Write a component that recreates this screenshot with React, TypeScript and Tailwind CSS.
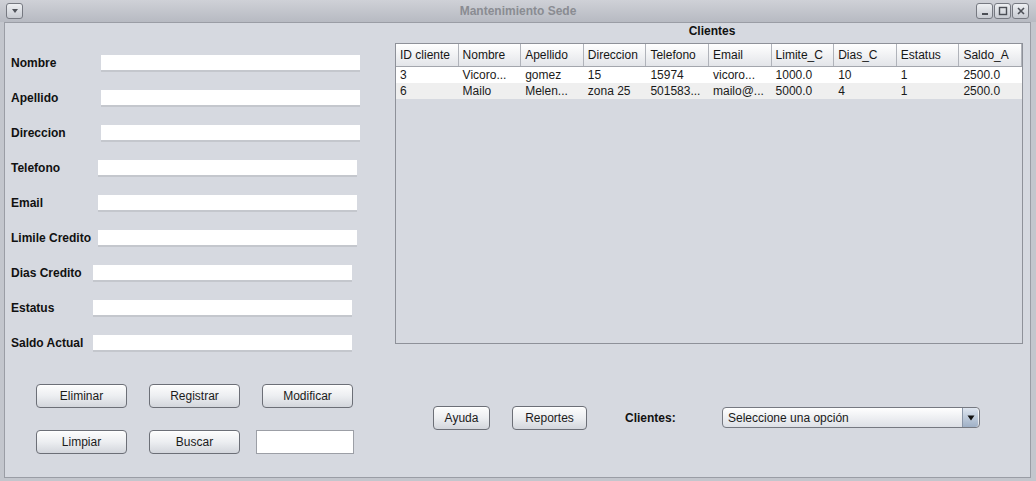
import React from 'react';

// --- form data ---
const groups = [
    { labelW: 'w-[90px]', rows: ['Nombre', 'Apellido', 'Direccion'] },
    { labelW: 'w-[87px]', rows: ['Telefono', 'Email', 'Limile Credito'] },
    { labelW: 'w-[82px]', rows: ['Dias Credito', 'Estatus', 'Saldo Actual'] },
];

const columns = ['ID cliente', 'Nombre', 'Apellido', 'Direccion', 'Telefono', 'Email', 'Limite_C', 'Dias_C', 'Estatus', 'Saldo_A'];

const clientes = [
    ['3', 'Vicoro...', 'gomez', '15', '15974', 'vicoro...', '1000.0', '10', '1', '2500.0'],
    ['6', 'Mailo', 'Melen...', 'zona 25', '501583...', 'mailo@...', '5000.0', '4', '1', '2500.0'],
];

const WinButton: React.FC<{ className?: string; children: React.ReactNode }> = ({ className = '', children }) => (
    <div className={`h-[24px] flex items-center justify-center rounded-[4px] border border-[#6c6f77] bg-gradient-to-b from-[#fdfdfd] via-[#eceef1] to-[#d3d6dc] text-[12px] text-[#1b1b1b] shadow-[inset_0_1px_0_#ffffff] ${className}`}>
        {children}
    </div>
);

const TitleButton: React.FC<{ children: React.ReactNode }> = ({ children }) => (
    <div className="w-[17px] h-[16px] rounded-[3px] border border-[#767981] bg-gradient-to-b from-[#eef0f3] to-[#c7cad1] flex items-center justify-center">
        {children}
    </div>
);

const TextField: React.FC<{ w?: string }> = ({ w = 'w-[259px]' }) => (
    <div className={`${w} h-[15px] bg-white shadow-[0_2px_0_#c4c7cd]`} />
);

export default function App() {
    return (
        <div className="w-[1036px] h-[481px] flex flex-col bg-[#c3c6cd] overflow-hidden" style={{ fontFamily: '"Liberation Sans", Arial, sans-serif' }}>
            {/* title bar */}
            <div className="h-[22px] shrink-0 relative flex items-center justify-between px-[6px] bg-gradient-to-b from-[#cfd1d7] to-[#b7bac2]">
                <TitleButton>
                    <svg width="8" height="6" viewBox="0 0 8 6"><path d="M1 1h6L4 5z" fill="#50535a" /></svg>
                </TitleButton>
                <div className="absolute left-0 right-0 top-0 h-[22px] flex items-center justify-center pointer-events-none">
                    <span className="text-[12px] font-bold text-[#8a8c92]">Mantenimiento Sede</span>
                </div>
                <div className="flex gap-[1px] mr-[1px]">
                    <TitleButton>
                        <svg width="10" height="10" viewBox="0 0 10 10"><path d="M2 8h6" stroke="#4c4f56" strokeWidth="2" /></svg>
                    </TitleButton>
                    <TitleButton>
                        <svg width="10" height="10" viewBox="0 0 10 10"><rect x="1.5" y="1.5" width="7" height="7" fill="none" stroke="#4c4f56" strokeWidth="1.4" /></svg>
                    </TitleButton>
                    <TitleButton>
                        <svg width="10" height="10" viewBox="0 0 10 10"><path d="M2 2l6 6M8 2l-6 6" stroke="#4c4f56" strokeWidth="1.6" /></svg>
                    </TitleButton>
                </div>
            </div>

            {/* content panel */}
            <div className="ml-[4px] mr-[5px] h-[456px] border border-[#9a9da5] bg-[#d6d9e0] flex">
                {/* left form */}
                <div className="w-[390px] shrink-0 pl-[6px] pt-[22px]">
                    {groups.map(g => g.rows.map(label => (
                        <div key={label} className="h-[35px] flex items-center">
                            <span className={`${g.labelW} shrink-0 text-[12px] font-bold text-[#111]`}>{label}</span>
                            <TextField />
                        </div>
                    )))}
                    <div className="pl-[25px] mt-[24px] flex flex-col gap-[22px]">
                        <div className="flex gap-[22px]">
                            <WinButton className="w-[91px]">Eliminar</WinButton>
                            <WinButton className="w-[91px]">Registrar</WinButton>
                            <WinButton className="w-[91px]">Modificar</WinButton>
                        </div>
                        <div className="flex gap-[22px] items-center">
                            <WinButton className="w-[91px]">Limpiar</WinButton>
                            <WinButton className="w-[91px]">Buscar</WinButton>
                            <div className="w-[98px] h-[24px] -ml-[6px] bg-white border border-[#9c9fa6]" />
                        </div>
                    </div>
                </div>

                {/* right: table and actions */}
                <div className="flex-1 flex flex-col">
                    <div className="h-[16px] flex items-center justify-center pl-[12px] pr-[6px] w-[628px]">
                        <span className="text-[12px] font-bold text-[#111]">Clientes</span>
                    </div>
                    <div className="mt-[4px] w-[628px] h-[301px] border border-[#8e9199] bg-[#d6d9e0] flex flex-col">
                        <div className="grid grid-cols-10 h-[23px] border-b border-[#a3a6ad] bg-gradient-to-b from-[#ffffff] to-[#e3e5e9]">
                            {columns.map(c => (
                                <div key={c} className="flex items-center pl-[4px] border-r border-[#b0b3ba] text-[12px] text-[#161616] whitespace-nowrap overflow-hidden">{c}</div>
                            ))}
                        </div>
                        {clientes.map((row, i) => (
                            <div key={row[0]} className={`grid grid-cols-10 h-[16px] ${i % 2 === 0 ? 'bg-white' : 'bg-[#efefef]'}`}>
                                {row.map((v, j) => (
                                    <div key={j} className="flex items-center pl-[4px] text-[12px] text-[#1a1a1a] whitespace-nowrap overflow-hidden">{v}</div>
                                ))}
                            </div>
                        ))}
                    </div>

                    <div className="mt-[62px] flex items-center">
                        <WinButton className="ml-[38px] w-[57px]">Ayuda</WinButton>
                        <WinButton className="ml-[22px] w-[75px]">Reportes</WinButton>
                        <span className="ml-[38px] w-[97px] text-[12px] font-bold text-[#111]">Clientes:</span>
                        <div className="w-[258px] h-[21px] rounded-[4px] border border-[#767981] bg-gradient-to-b from-[#ffffff] to-[#dde0e6] flex items-center justify-between pl-[5px] -mt-[1px]">
                            <span className="text-[12px] text-[#1a1a1a]">Seleccione una opción</span>
                            <div className="w-[16px] h-[19px] mr-[1px] rounded-r-[3px] border-l border-[#8a96a8] bg-gradient-to-b from-[#dfe6f0] to-[#9fb0c6] flex items-center justify-center">
                                <svg width="8" height="6" viewBox="0 0 8 6"><path d="M0.5 0.5h7L4 5.5z" fill="#111" /></svg>
                            </div>
                        </div>
                    </div>
                </div>
            </div>
        </div>
    );
}
